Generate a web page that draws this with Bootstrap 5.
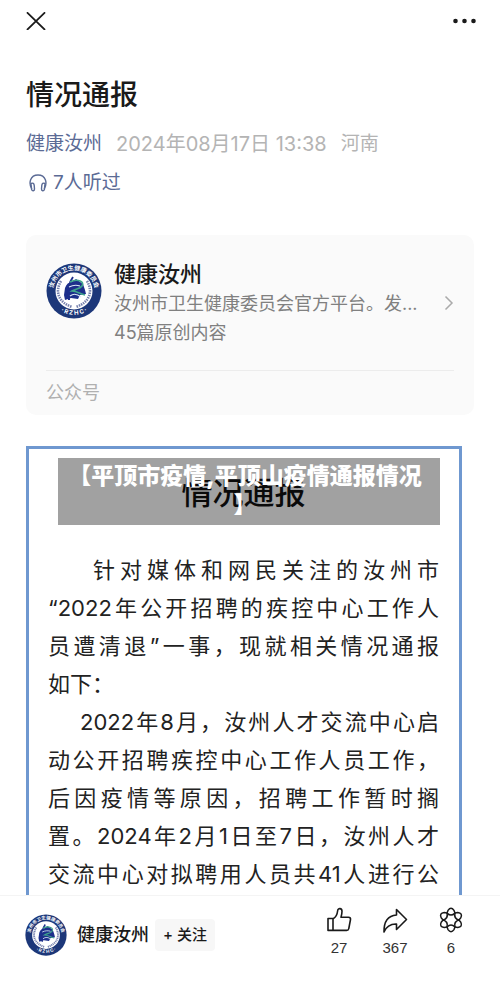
<!DOCTYPE html>
<html lang="zh-CN">
<head>
<meta charset="utf-8">
<meta name="viewport" content="width=device-width, initial-scale=1">
<title>情况通报</title>
<link href="https://cdn.jsdelivr.net/npm/bootstrap@5.3.0/dist/css/bootstrap.min.css" rel="stylesheet">
<style>
body{font-family:Inter,"Noto Sans CJK SC",sans-serif;color:#1a1a1a;background:#fff}
svg{display:block;flex:none}
a{text-decoration:none}
.icon-btn{padding:0;border:0;background:none;color:#1a1a1a}
.topbar{padding:12px 24px 0 26px}
.article{padding:0 26px}
.headline{font-size:28px;line-height:40px;font-weight:500;margin:45px 0 0}
.meta{font-size:19px;line-height:28px;margin-top:15px;gap:14px;color:#b4b4b4}
.meta-link{color:#5b6b95}
.meta-date{font-size:20px}
.listen{font-size:19px;line-height:28px;margin-top:11px;padding-left:3px;gap:6px;color:#5b6b95}
.account{background:#fafafa;border-radius:10px;margin-top:38px;padding:24px 20px 0;color:#1a1a1a}
.account-name{font-size:22px;line-height:30px;font-weight:500}
.account-desc{font-size:18px;line-height:29px;color:#808080}
.account-kind{font-size:18px;line-height:26px;color:#b0b0b0;border-top:1px solid #ececec;margin-top:23px;padding:9px 0}
.notice{position:relative;border:3px solid #6f98d0;border-bottom:0;margin:31px 12px 0 0;padding:24px 20px 2px 19px}
.notice-title{font-size:31px;line-height:40px;font-weight:500;margin:0;color:#111}
.notice-body{font-size:22px;line-height:38px;margin-top:38px;color:#222}
.notice-body p{margin:0}
.notice-body span{display:block;white-space:nowrap;text-align:justify;text-align-last:justify}
.notice-body .indent-a{padding-left:45px}
.notice-body .indent-b{padding-left:32px}
.notice-body .line-end{text-align-last:left}
.caption-box{position:absolute;top:9px;left:29px;right:19px;padding:4px 8px 5px 0;background:rgba(0,0,0,.37);color:#fff;font-size:23px;line-height:29px;font-weight:900;text-align:center}
.actions{border-top:1px solid #f4f4f4;background:#fff;padding:10px 29px 26px 25px}
.follow-name{font-size:18px;line-height:26px;font-weight:500;margin-left:10px}
.follow-btn{background:#f7f7f7;border:0;border-radius:4px;font-size:15px;line-height:22px;font-weight:500;padding:5px 8px;margin-left:6px;color:#1a1a1a}
.count-btn{width:40px;font-family:"Liberation Sans",Arial,sans-serif;font-size:15px;line-height:20px;color:#333}
.count-btn svg{margin:0 auto 4px}
.counts{gap:16px}
</style>
</head>
<body>
<svg width="0" height="0" class="position-absolute" aria-hidden="true">
  <defs>
    <path id="arc-top" d="M8.500 36A21 21 0 1 1 47.500 36"/>
    <path id="arc-bottom" d="M8 41.500A24.500 24.500 0 0 0 48 41.500"/>
    <symbol id="emblem" viewBox="0 0 56 56">
      <circle cx="28" cy="28" r="27.500" fill="#1c3779"/>
      <circle cx="28" cy="28" r="18.500" fill="#fff"/>
      <g fill="none" stroke="#7580ad" stroke-width="2.600" stroke-dasharray="1.500 .9">
        <path d="M15 18C8 30 14 40 26 44"/><path d="M41 18C48 30 42 40 30 44"/>
      </g>
      <path d="M19 25q2-6 7-6l4-3 7 5 2 6 1 4-6 1-2 4-7-1-6 2-1-5z" fill="#1d2f8b"/>
      <path d="M27 14c-4 5-5 12-4 23" fill="none" stroke="#1d2f8b" stroke-width="2"/>
      <path d="M24 19c8-4 15 0 12 4-2 3-7 3-10 5 5 0 8 3 13 4" fill="none" stroke="#3fa58c" stroke-width="1.600"/>
      <path d="M23 24c4-2 8-2 11-1M24 33q5-4 11 1" fill="none" stroke="#d9e7f5" stroke-width="1.100"/>
      <text font-size="6" font-weight="700" fill="#fff" text-anchor="middle"><textPath href="#arc-top" startOffset="50%">汝州市卫生健康委员会</textPath></text>
      <text font-size="6" font-weight="700" fill="#fff" text-anchor="middle"><textPath href="#arc-bottom" startOffset="50%">·  R  Z  H  C  ·</textPath></text>
    </symbol>
  </defs>
</svg>

<header class="topbar d-flex justify-content-between align-items-center">
  <button class="icon-btn" type="button" aria-label="关闭">
    <svg width="20" height="18" viewBox="0 0 20 18" fill="none" stroke="currentColor" stroke-width="1.800" stroke-linecap="round"><path d="M1.500 .9l17 16.500M18.500 .9l-17 16.500"/></svg>
  </button>
  <button class="icon-btn" type="button" aria-label="更多">
    <svg width="23" height="6" viewBox="0 0 23 6" fill="currentColor"><circle cx="2.500" cy="3" r="2.300"/><circle cx="11.500" cy="3" r="2.300"/><circle cx="20.500" cy="3" r="2.300"/></svg>
  </button>
</header>

<main class="article">
  <h1 class="headline">情况通报</h1>
  <div class="meta d-flex text-nowrap">
    <a class="meta-link" href="#">健康汝州</a><span class="meta-date">2024年08月17日 13:38</span><span>河南</span>
  </div>
  <a class="listen d-flex align-items-center" href="#">
    <svg width="18" height="18" viewBox="0 0 18 18" fill="none" stroke="currentColor" stroke-width="1.400" stroke-linecap="round" stroke-linejoin="round"><path d="M2.600 14.500C-.5 9 1 1 9 1s9.500 8 6.400 13.500"/><path d="M2 9.500c2-1 3 0 3.200 1.800l.3 3.700c0 2.200-2.200 2.400-2.900.5zM16 9.500c-2-1-3 0-3.200 1.800l-.3 3.700c0 2.200 2.200 2.400 2.900.5z"/></svg>
    <span>7人听过</span>
  </a>

  <a class="account d-block" href="#">
    <div class="d-flex align-items-center">
      <svg class="align-self-start mt-1" width="56" height="56" role="img" aria-label="健康汝州"><use href="#emblem"/></svg>
      <div class="flex-fill overflow-hidden ms-2 ps-1">
        <div class="account-name">健康汝州</div>
        <div class="account-desc text-nowrap">汝州市卫生健康委员会官方平台。发...</div>
        <div class="account-desc">45篇原创内容</div>
      </div>
      <svg width="10" height="16" viewBox="0 0 10 16" fill="none" stroke="#aaa" stroke-width="1.500"><path d="M1.500 1.500L8 8l-6.500 6.500"/></svg>
    </div>
    <div class="account-kind">公众号</div>
  </a>

  <section class="notice">
    <h2 class="notice-title text-center">情况通报</h2>
    <div class="caption-box">【平顶市疫情,平顶山疫情通报情况<br>】</div>
    <div class="notice-body">
      <p>
        <span class="indent-a">针对媒体和网民关注的汝州市</span>
        <span>“2022年公开招聘的疾控中心工作人</span>
        <span>员遭清退”一事，现就相关情况通报</span>
        <span class="line-end">如下：</span>
      </p>
      <p>
        <span class="indent-b">2022年8月，汝州人才交流中心启</span>
        <span>动公开招聘疾控中心工作人员工作，</span>
        <span>后因疫情等原因，招聘工作暂时搁</span>
        <span>置。2024年2月1日至7日，汝州人才</span>
        <span>交流中心对拟聘用人员共41人进行公</span>
      </p>
    </div>
  </section>
</main>

<footer class="actions sticky-bottom d-flex align-items-start justify-content-between">
  <div class="d-flex align-items-center pt-2">
    <svg width="42" height="42" role="img" aria-label="健康汝州"><use href="#emblem"/></svg>
    <span class="follow-name text-nowrap">健康汝州</span>
    <button class="follow-btn text-nowrap" type="button">+ 关注</button>
  </div>
  <div class="counts d-flex">
    <button class="icon-btn count-btn" type="button" aria-label="赞 27">
      <svg width="26" height="28" viewBox="0 0 26 28" fill="none" stroke="#1a1a1a" stroke-width="1.600" stroke-linejoin="round"><path d="M2 12.500h5.500c3-1.500 3.700-4 4.200-8 .2-2.600 4.300-2.600 4.300.8 0 2.400-.5 4.200-1 6h7.500c1.500 0 2.200.8 2 2.200l-1.700 9c-.2 1.300-1 1.900-2.200 1.900H2zM7 12.500v12"/></svg>27
    </button>
    <button class="icon-btn count-btn" type="button" aria-label="分享 367">
      <svg width="26" height="28" viewBox="0 0 26 28" fill="none" stroke="#1a1a1a" stroke-width="1.600" stroke-linejoin="round"><path d="M14.500 3.500l10 10-10 10v-5.500c-5.500-.2-10 2-12.500 8C1.800 16 6 9.700 14.500 9z"/></svg>367
    </button>
    <button class="icon-btn count-btn" type="button" aria-label="在看 6">
      <svg width="26" height="28" viewBox="0 0 26 28" fill="none" stroke="#1a1a1a" stroke-width="1.500" stroke-linejoin="round">
        <path id="petal" d="M9 7.100L10 4.400Q13 .2 16 4.400L17 7.100Q13 11 9 7.100z"/>
        <use href="#petal" transform="rotate(60 13 14)"/><use href="#petal" transform="rotate(120 13 14)"/><use href="#petal" transform="rotate(180 13 14)"/><use href="#petal" transform="rotate(240 13 14)"/><use href="#petal" transform="rotate(300 13 14)"/>
      </svg>6
    </button>
  </div>
</footer>
<script src="https://cdn.jsdelivr.net/npm/bootstrap@5.3.0/dist/js/bootstrap.bundle.min.js"></script>
</body>
</html>
